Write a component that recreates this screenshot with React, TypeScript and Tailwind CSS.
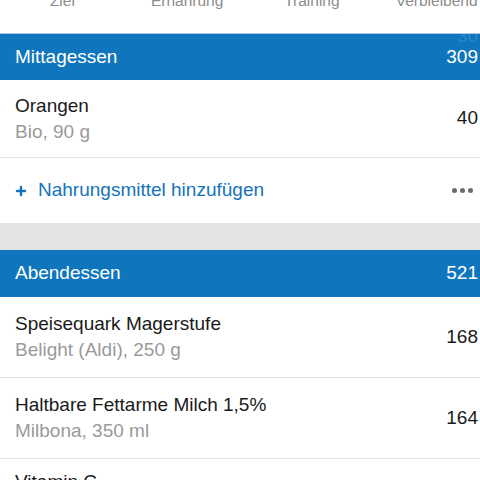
import { Plus } from "lucide-react";

type Food = { name: string; detail: string; kcal: number };

const lunch: Food[] = [{ name: "Orangen", detail: "Bio, 90 g", kcal: 40 }];

const dinner: Food[] = [
  { name: "Speisequark Magerstufe", detail: "Belight (Aldi), 250 g", kcal: 168 },
  { name: "Haltbare Fettarme Milch 1,5%", detail: "Milbona, 350 ml", kcal: 164 },
];

const MealHeader = ({
  title,
  total,
  ghost,
  tall,
}: {
  title: string;
  total: number;
  ghost?: string;
  tall?: boolean;
}) => (
  <div
    className={
      tall
        ? "relative flex h-[47px] items-center justify-between overflow-hidden bg-[#0f76be] pl-[15px] pr-[2px] text-[19px] text-white"
        : "relative flex h-[46px] items-center justify-between overflow-hidden bg-[#0f76be] pl-[15px] pr-[2px] text-[19px] text-white"
    }
  >
    {ghost && (
      <span className="absolute right-[2px] top-[-12px] text-[19px] text-[#2c86c7]">{ghost}</span>
    )}
    <span className="relative">{title}</span>
    <span className="relative">{total}</span>
  </div>
);

const FoodRow = ({ food, short }: { food: Food; short?: boolean }) => (
  <div
    className={
      short
        ? "flex h-[78px] items-center justify-between border-b border-[#e3e3e3] pl-[15px] pr-[2px]"
        : "flex h-[81px] items-center justify-between border-b border-[#e3e3e3] pl-[15px] pr-[2px]"
    }
  >
    <div className="flex flex-col">
      <span className="text-[19px] leading-[26px] text-[#1a1a1a]">{food.name}</span>
      <span className="text-[19px] leading-[26px] text-[#9a9a9a]">{food.detail}</span>
    </div>
    <span className="text-[19px] text-[#1a1a1a]">{food.kcal}</span>
  </div>
);

const AddRow = () => (
  <div className="flex h-[65px] items-center justify-between pl-[14px] pr-[7px]">
    <div className="flex items-center gap-[10px] text-[19px] text-[#1473bb]">
      <Plus className="h-[14px] w-[14px]" strokeWidth={4} />
      <span>Nahrungsmittel hinzufügen</span>
    </div>
    <div className="flex gap-[3px]">
      <span className="h-[5px] w-[5px] rounded-full bg-[#6b6b6b]" />
      <span className="h-[5px] w-[5px] rounded-full bg-[#6b6b6b]" />
      <span className="h-[5px] w-[5px] rounded-full bg-[#6b6b6b]" />
    </div>
  </div>
);

export default function App() {
  return (
    <div className="h-[480px] w-[480px] overflow-hidden bg-white font-['Liberation_Sans',Arial,sans-serif]">
      <div className="h-[34px] overflow-hidden border-b border-[#a8c9e3]">
        <div className="mt-[-9px] grid w-[499px] grid-cols-4 text-center text-[15.5px] leading-[20px] text-[#8c8c8c]">
          <span>Ziel</span>
          <span>Ernährung</span>
          <span>Training</span>
          <span>Verbleibend</span>
        </div>
      </div>
      <MealHeader title="Mittagessen" total={309} ghost="30" />
      {lunch.map((f) => (
        <FoodRow key={f.name} food={f} short />
      ))}
      <AddRow />
      <div className="h-[27px] bg-[#e3e3e3]" />
      <MealHeader title="Abendessen" total={521} tall />
      {dinner.map((f) => (
        <FoodRow key={f.name} food={f} />
      ))}
      <div className="pl-[15px] pt-[10px] text-[19px] leading-[26px] text-[#1a1a1a]">Vitamin C</div>
    </div>
  );
}
